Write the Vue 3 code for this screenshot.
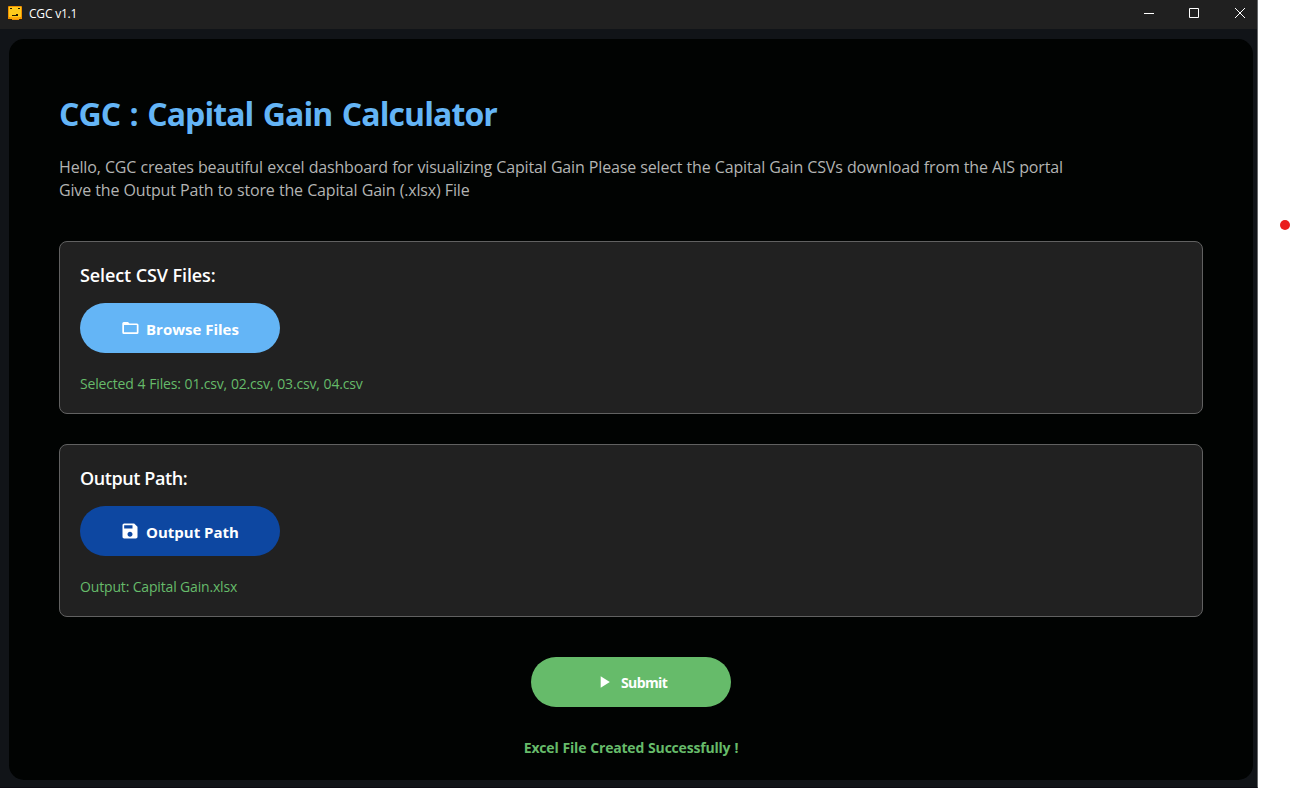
<script setup>
const sections = [
  { key: 'csv', title: 'Select CSV Files:', button: 'Browse Files', icon: 'folder', status: 'Selected 4 Files: 01.csv, 02.csv, 03.csv, 04.csv' },
  { key: 'out', title: 'Output Path:', button: 'Output Path', icon: 'save', status: 'Output: Capital Gain.xlsx' },
]
</script>

<template>
  <div class="screen">
    <div class="window">
      <header class="titlebar">
        <svg class="logo" width="14" height="14" viewBox="0 0 14 14">
          <rect width="14" height="14" rx="1" fill="#f09000" />
          <rect x="1" y="1" width="12" height="10" fill="#ffca1c" />
          <path d="M2 11h10v2H2z" fill="#ffa90a" />
          <path d="M2 2.5h2M10 2.5h2M4 9.5h3M8 8.5h2M7 9.5h3" fill="none" stroke="#241800" />
          <path d="M0 13.5h4M11 13.5h3" stroke="#352100" />
        </svg>
        <span class="app-name">CGC v1.1</span>
        <div class="controls">
          <svg width="10" height="10" viewBox="0 0 10 10"><path d="M0 5.5h10" /></svg>
          <svg width="10" height="10" viewBox="0 0 10 10"><path d="M.5.5h9v9h-9z" /></svg>
          <svg width="10" height="10" viewBox="0 0 10 10"><path d="M0 0l10 10M10 0L0 10" /></svg>
        </div>
      </header>
      <main class="panel">
        <h1><span>CGC : Capital Gain Calculator</span></h1>
        <p class="intro">
          <span class="l1">Hello, CGC creates beautiful excel dashboard for visualizing Capital Gain Please select the Capital Gain CSVs download from the AIS portal</span><br>
          <span class="l2">Give the Output Path to store the Capital Gain (.xlsx) File</span>
        </p>
        <section v-for="s in sections" :key="s.key" class="card" :class="s.key">
          <h2><span>{{ s.title }}</span></h2>
          <button type="button">
            <svg v-if="s.icon === 'folder'" width="20" height="20" viewBox="0 0 20 20"><path fill-rule="evenodd" d="M3.800 4H8l1.500 1.500H17q1.500 0 1.500 1.500V14.500q0 1.500-1.500 1.500H3.800q-1.500 0-1.500-1.500V5.500q0-1.500 1.500-1.500zM4 7v7.300h12.800V7z" /></svg>
            <svg v-else width="20" height="20" viewBox="0 0 24 24"><path d="M17 3H5c-1.11 0-2 .9-2 2v14c0 1.1.89 2 2 2h14c1.1 0 2-.9 2-2V7l-4-4zm-5 16c-1.66 0-3-1.34-3-3s1.34-3 3-3 3 1.34 3 3-1.34 3-3 3zm3-10H5V5h10v4z" /></svg>
            <span>{{ s.button }}</span>
          </button>
          <p class="status"><span>{{ s.status }}</span></p>
        </section>
        <button type="button" class="submit">
          <svg width="20" height="20" viewBox="0 0 24 24"><path d="M8 5v14l11-7z" /></svg>
          <span>Submit</span>
        </button>
        <p class="result"><span>Excel File Created Successfully !</span></p>
      </main>
    </div>
    <i class="dot"></i>
  </div>
</template>

<style>
body { margin: 0; background: #fff; overflow: hidden; }
</style>

<style scoped>
* { box-sizing: border-box; margin: 0; }
.screen { position: relative; width: 1291px; height: 788px; background: #fff; overflow: hidden; font-family: "Open Sans", "Noto Sans", sans-serif; }
.window { width: 1258px; height: 788px; background: #111418; border-right: 1px solid #66686a; border-bottom: 1px solid #0c0b12; }
.titlebar { height: 29px; background: #202020; display: flex; align-items: center; padding: 0 12px 3px 8px; color: #fff; font-size: 12px; }
.app-name { margin-left: 7px; line-height: 16px; letter-spacing: -.2px; padding-top: 1px; }
.controls { margin-left: auto; display: flex; gap: 35px; }
.controls svg { display: block; fill: none; stroke: #fff; }
.controls svg:last-child { margin-left: 1px; }
.panel { width: 1244px; height: 741px; margin: 10px 0 0 9px; padding: 50px 50px 0; border-radius: 15px; background: #010302; display: flex; flex-direction: column; }
.panel > * { flex-shrink: 0; }
h1 { height: 48px; line-height: 49px; font-size: 32px; font-weight: 700; color: #64b5f6; white-space: nowrap; letter-spacing: -.92px; word-spacing: 2px; }
.intro { margin-top: 19px; height: 46px; line-height: 23px; font-size: 16px; color: #b3b4b3; white-space: nowrap; letter-spacing: -.17px; word-spacing: .3px; }
.card { height: 173px; margin-top: 39px; padding: 20px; border: 1px solid #616161; border-radius: 8px; background: #212121; }
.card + .card { margin-top: 30px; }
h2 { height: 27px; line-height: 27px; font-size: 18px; font-weight: 600; color: #fff; letter-spacing: -.1px; }
.out h2 { letter-spacing: -.4px; }
button { display: flex; align-items: center; justify-content: flex-start; width: 200px; height: 50px; padding: 0 0 0 40px; margin-top: 14px; border: 0; border-radius: 25px; background: #64b5f6; color: #fff; font: 700 15px "Open Sans", "Noto Sans", sans-serif; white-space: nowrap; }
button svg { fill: #fff; flex: none; }
button span { margin-left: 6px; line-height: 20px; position: relative; top: 1px; }
.out button { background: #0d47a1; }
.status { margin-top: 20px; line-height: 22px; font-size: 14px; color: #66bb6a; letter-spacing: -.18px; word-spacing: .45px; }
.out .status { letter-spacing: -.16px; word-spacing: 0; }
.submit { align-self: center; margin-top: 40px; background: #66bb6a; font-size: 14px; padding-left: 63px; letter-spacing: -.6px; }
.submit span { margin-left: 7px; }
.result { align-self: center; margin-top: 30px; line-height: 22px; font-size: 14px; font-weight: 700; color: #66bb6a; white-space: nowrap; letter-spacing: -.2px; word-spacing: .6px; }
.dot { position: absolute; left: 1280px; top: 220px; width: 10px; height: 10px; border-radius: 50%; background: #ea1c1c; }
</style>
